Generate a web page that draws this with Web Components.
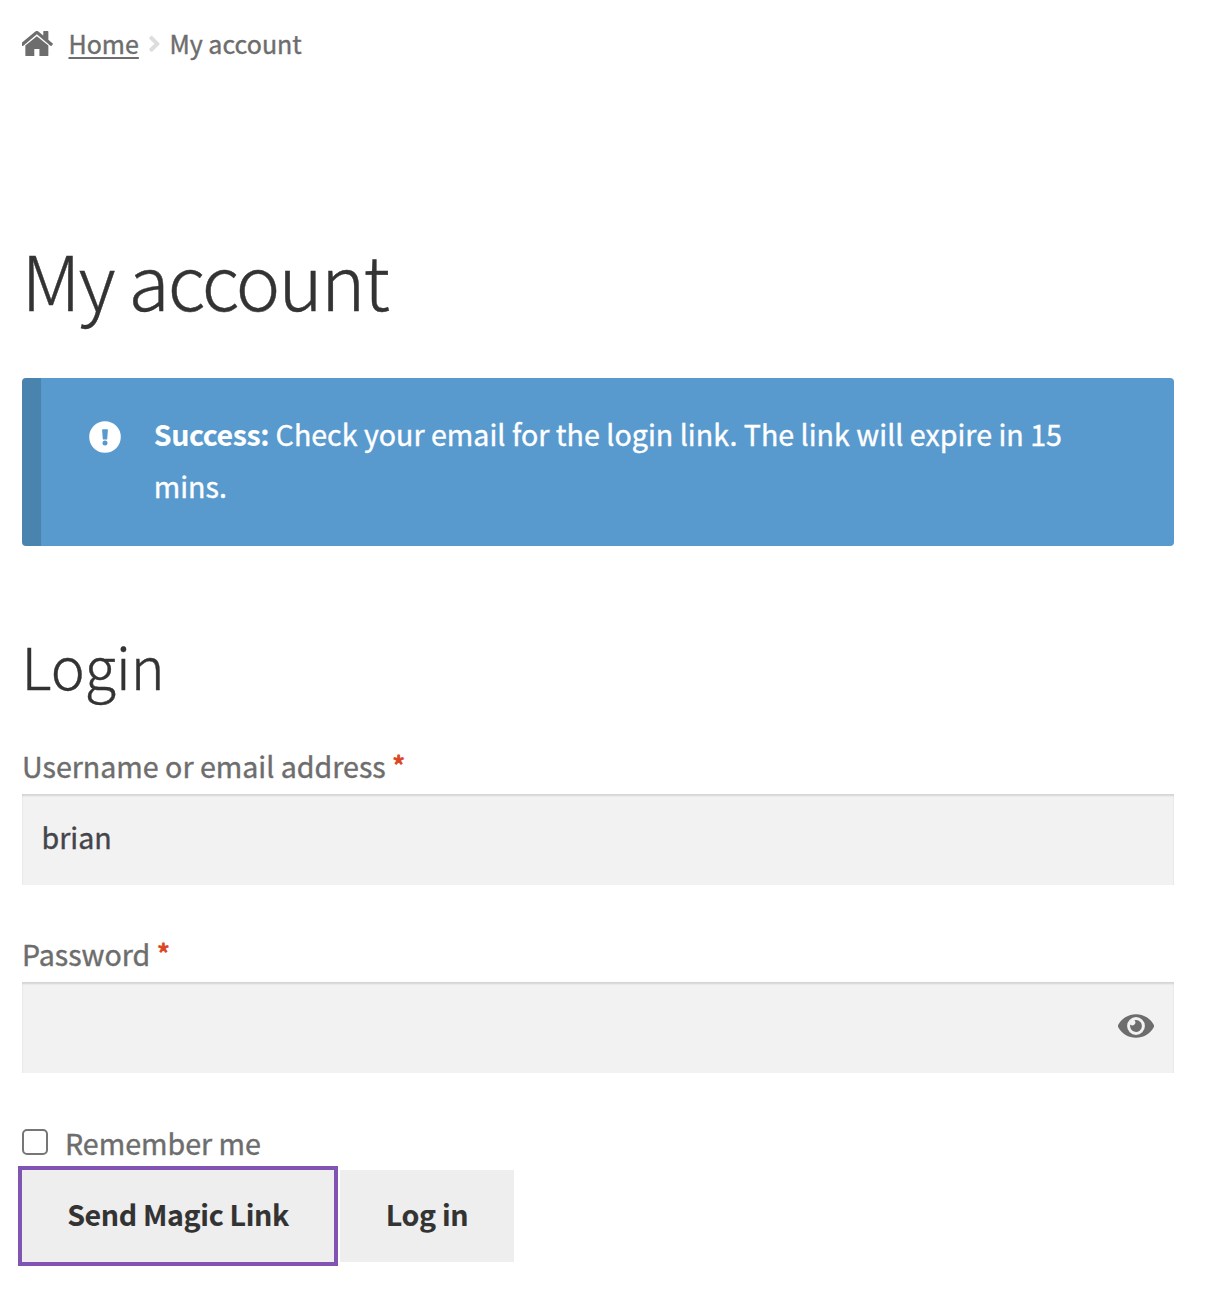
<!DOCTYPE html>
<html lang="en">
<head>
<meta charset="utf-8">
<title>My account</title>
<style>
body{margin:0;background:#fff;color:#6d6d6d;font:400 28.6px/52px "Noto Sans CJK SC","Source Sans Pro",sans-serif;-webkit-text-stroke:.4px currentColor}
</style>
</head>
<body>
<account-page></account-page>
<script>
const define=(name,html,setup)=>customElements.define(name,class extends HTMLElement{
  constructor(){
    super();
    const t=document.createElement('template');
    t.innerHTML=html;
    this.attachShadow({mode:'open'}).append(t.content.cloneNode(true));
  }
  connectedCallback(){ if(setup) setup(this,this.shadowRoot); }
});

const icons={
  home:['88 256 1552 1280','M1408 992v480q0 26-19 45t-45 19h-384v-384h-256v384h-384q-26 0-45-19t-19-45v-480q0-1 .5-3t.5-3l575-474 575 474q1 2 1 6zm223-69l-62 74q-8 9-21 11h-3q-13 0-21-7l-692-577-692 577q-12 8-24 7-13-2-21-11l-62-74q-8-10-7-23.5t11-21.5l719-599q32-26 76-26t76 26l244 204v-195q0-14 9-23t23-9h192q14 0 23 9t9 23v408l219 182q10 8 11 21.5t-7 23.5z'],
  chevron:['0 0 256 512','M224.3 273l-136 136c-9.4 9.4-24.6 9.4-33.9 0l-22.6-22.6c-9.4-9.4-9.4-24.6 0-33.9l96.4-96.4-96.4-96.4c-9.4-9.4-9.4-24.6 0-33.9L54.3 103c9.4-9.4 24.6-9.4 33.9 0l136 136c9.5 9.4 9.5 24.6.1 34z'],
  notice:['0 0 32 32','M16 .2a15.8 15.8 0 1 0 0 31.6a15.8 15.8 0 1 0 0-31.6zM13.6 8.2h4.8q.5 0 .5.5l-.7 9.4q0 .5-.5.5h-3.4q-.5 0-.5-.5l-.7-9.4q0-.5.5-.5zM16 19.6a2.5 2.5 0 1 1 0 5a2.5 2.5 0 1 1 0-5z'],
  eye:['0 0 36 32','M.4 14.5C3.9 8.3 10.5 4.2 18 4.2s14.1 4.1 17.6 10.3a3 3 0 0 1 0 3C32.1 23.7 25.5 27.8 18 27.8S3.9 23.7.4 17.5a3 3 0 0 1 0-3zM18 7.1a8.9 8.9 0 1 0 0 17.8a8.9 8.9 0 1 0 0-17.8zM18 10.1a5.9 5.9 0 1 1-5.7 4.4a2.9 2.9 0 0 0 4.1-4.2a6 6 0 0 1 1.6-.2z']
};
define('ui-icon',`<style>:host{display:block;flex:none}svg{display:block;width:100%;height:100%;fill:currentColor;stroke:none}</style><svg><path fill-rule="evenodd"/></svg>`,(el,r)=>{
  const [box,d]=icons[el.getAttribute('name')];
  r.querySelector('svg').setAttribute('viewBox',box);
  r.querySelector('path').setAttribute('d',d);
});

define('bread-crumbs',`<style>
:host{display:flex;align-items:center;height:42px;font-size:25px;line-height:42px}
.home{width:31px;height:25.6px;margin:1.4px 15.1px 0 .4px}
.sep{width:12.8px;height:25.6px;color:#ddd;margin:2px 8.8px 0 9px}
a{color:inherit;text-decoration:underline;text-decoration-thickness:2px;text-underline-offset:3px}
</style><ui-icon class="home" name="home"></ui-icon><a href="#">Home</a><ui-icon class="sep" name="chevron"></ui-icon><span><slot></slot></span>`);

define('page-heading',`<style>
:host{display:block;color:#333}
h1,h2{margin:0 0 0 -.5px;font-weight:300}
h1{font-size:75px;line-height:100px;letter-spacing:-1.8px}
h2{font-size:57.3px;line-height:80px}
</style>`,(el,r)=>{
  const h=document.createElement(el.getAttribute('level')==='2'?'h2':'h1');
  h.append(document.createElement('slot'));
  r.append(h);
});

define('notice-box',`<style>
:host{display:flex;box-sizing:border-box;height:168px;padding:30px 64px 0 48px;border-left:19px solid #4a83ae;border-radius:4px;background:#5899ce;color:#fff}
ui-icon{width:32px;height:32px;margin:12.7px 32.5px 0 .2px}
p{margin:0;letter-spacing:.02px}
::slotted(strong){letter-spacing:-.4px;-webkit-text-stroke-width:.1px}
</style><ui-icon name="notice"></ui-icon><p><slot></slot></p>`);

define('form-field',`<style>
:host{display:block}
label{display:block;height:54px}
b{font-weight:400;color:#dc4522;-webkit-text-stroke-width:.9px}
.box{display:flex;align-items:center;box-sizing:border-box;height:91px;padding:0 20px 0 19.5px;background:#f2f2f2;box-shadow:inset 0 2px 2px rgba(0,0,0,.125)}
input{flex:1;min-width:0;height:52px;margin:0 0 6px;padding:0;border:0;background:none;outline:0;font:inherit;color:#43454b}
ui-icon{display:none;width:36px;height:32px;margin-bottom:3px}
:host([reveal]) ui-icon{display:block}
</style><label><slot></slot> <b>*</b></label><div class="box"><input><ui-icon name="eye"></ui-icon></div>`,(el,r)=>{
  const i=r.querySelector('input');
  i.type=el.getAttribute('type')||'text';
  i.value=el.getAttribute('value')||'';
});

define('check-option',`<style>
:host{display:block}
label{display:flex;height:52px}
input{appearance:none;box-sizing:border-box;width:26px;height:26px;margin:12px 17px 0 0;border:2px solid #767676;border-radius:5px;background:#fff}
</style><label><input type="checkbox"><span><slot></slot></span></label>`);

define('action-button',`<style>
:host{display:block}
button{display:block;box-sizing:border-box;width:100%;height:92px;margin:0;padding:0 0 4px;border:0;background:#eee;color:#333;font:inherit;font-weight:700;line-height:52px;letter-spacing:-.36px;-webkit-text-stroke-width:.1px}
:host([focused]) button{outline:4px solid #7f54b3}
</style><button type="button"><slot></slot></button>`);

define('account-page',`<style>
:host{display:block;padding:22px 34px 38px 22px}
bread-crumbs{margin-bottom:165px}
.title{margin-bottom:49px}
notice-box{margin-bottom:80px}
.login{margin-bottom:34px}
form-field{margin-bottom:43px}
check-option{margin-top:44px;margin-bottom:1px}
.actions{display:flex;gap:6px}
.send{width:312px}
.log{width:174px}
</style>
<bread-crumbs>My account</bread-crumbs>
<page-heading class="title">My account</page-heading>
<notice-box><strong>Success:</strong> Check your email for the login link. The link will expire in 15 mins.</notice-box>
<page-heading class="login" level="2">Login</page-heading>
<form-field value="brian">Username or email address</form-field>
<form-field type="password" reveal>Password</form-field>
<check-option>Remember me</check-option>
<div class="actions"><action-button class="send" focused>Send Magic Link</action-button><action-button class="log">Log in</action-button></div>`);
</script>
</body>
</html>
